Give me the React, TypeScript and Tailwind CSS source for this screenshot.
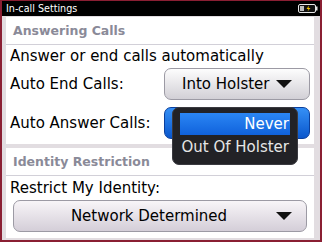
import React from "react";

const font = { fontFamily: '"DejaVu Sans", "Liberation Sans", sans-serif' };

function Battery() {
  return (
    <svg width="20" height="9" viewBox="0 0 20 9">
      <rect x="0.5" y="0.5" width="17" height="8" rx="1.5" fill="#111" stroke="#e8e8e8" />
      <rect x="2" y="2" width="4" height="5" fill="#bcbcbc" />
      <rect x="17.5" y="2.5" width="2" height="4" fill="#e8e8e8" />
      <path d="M11 1.5 L8.5 5 H10.5 L9.5 7.5 L12.5 4 H10.5 Z" fill="#f2c200" />
    </svg>
  );
}

function Caret() {
  return (
    <svg width="16" height="8" viewBox="0 0 16 8">
      <path d="M0 0 H16 L8 8 Z" fill="#111" />
    </svg>
  );
}

function SectionHeader({ title }: { title: string }) {
  return (
    <div className="h-[28px] flex items-center pl-[7px] pt-[2px] border-b border-[#d2d0d8]">
      <span className="text-[12.5px] font-bold text-[#8a8a98]">{title}</span>
    </div>
  );
}

export default function App() {
  return (
    <div
      style={font}
      className="w-[322px] h-[242px] flex flex-col overflow-hidden border-x-2 border-t border-b-2 border-[#8a1f33] bg-[#e2dde1]"
    >
      {/* Title bar */}
      <div className="h-[15px] bg-black flex items-center justify-between pl-1 pr-[2px]">
        <span className="text-[9.6px] leading-none text-white">In-call Settings</span>
        <Battery />
      </div>

      <div className="flex-1 flex flex-col gap-1 pl-1 pr-[6px] pt-[1px] pb-[2px]">
        {/* Answering Calls */}
        <div className="relative h-[127px] bg-white flex flex-col">
          <SectionHeader title="Answering Calls" />
          <div className="h-[23px] flex items-center pl-1 text-[15px] text-black">
            Answer or end calls automatically
          </div>
          <div className="h-[32px] flex items-center justify-between pl-1 pr-1 text-[15px] text-black">
            <span>Auto End Calls:</span>
            <div className="w-[146px] h-[32px] flex items-center justify-between rounded-[7px] border border-[#9c9aa4] bg-gradient-to-b from-[#fdfdfd] to-[#d2d0d6] pl-[17px] pr-[17px]">
              <span>Into Holster</span>
              <Caret />
            </div>
          </div>
          <div className="h-[32px] mt-[7px] flex items-center justify-between pl-1 pr-1 text-[15px] text-black">
            <span>Auto Answer Calls:</span>
            <div className="w-[146px] h-[32px] rounded-[7px] border border-[#0b3f9c] bg-gradient-to-b from-[#3590f6] to-[#0a56cc]" />
          </div>

          {/* Open dropdown list */}
          <div className="absolute left-[166px] top-[90px] w-[126px] h-[58px] rounded-[7px] bg-[#222226] border border-[#3a3a40] px-[7px] pt-[5px] text-[15px]">
            <div className="h-[22px] flex items-center justify-end pr-[1px] bg-gradient-to-b from-[#2b86f4] to-[#1062dc] text-white">
              Never
            </div>
            <div className="h-[24px] flex items-center justify-end pr-[1px] text-[#e6e6e6]">
              Out Of Holster
            </div>
          </div>
        </div>

        {/* Identity Restriction */}
        <div className="flex-1 bg-white flex flex-col">
          <SectionHeader title="Identity Restriction" />
          <div className="h-[24px] flex items-center pl-1 text-[15px] text-black">
            Restrict My Identity:
          </div>
          <div className="px-[7px]">
            <div className="h-[32px] flex items-center rounded-[7px] border border-[#9c9aa4] bg-gradient-to-b from-[#f8f5f8] to-[#d4ced8] pl-[8px] pr-[14px] text-[15px] text-black">
              <span className="flex-1 text-center">Network Determined</span>
              <Caret />
            </div>
          </div>
        </div>
      </div>
    </div>
  );
}
